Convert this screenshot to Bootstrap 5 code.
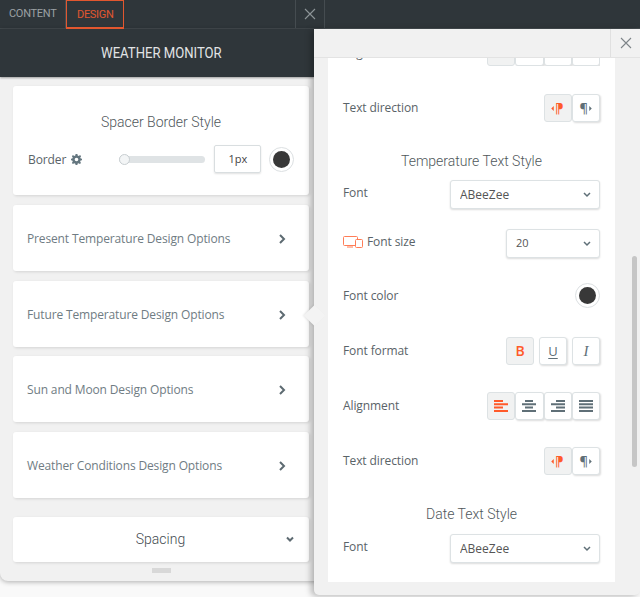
<!DOCTYPE html>
<html lang="en">
<head>
<meta charset="utf-8">
<title>Weather Monitor</title>
<link href="https://cdn.jsdelivr.net/npm/bootstrap@5.3.0/dist/css/bootstrap.min.css" rel="stylesheet">
<style>
html,body{height:100%;margin:0;overflow:hidden;background:#f9f9f9}
.app-frame{position:relative;width:640px;height:597px;overflow:hidden;background:#f9f9f9;font-family:"Open Sans","Liberation Sans",sans-serif;color:#5f6a70}
.tab-bar{height:29px;background:#2f363a;border-bottom:1px solid #454c50}
.tab-item{height:28px;width:66px;padding:0 9px;font:400 11px/28px Roboto,sans-serif;letter-spacing:-.3px;color:#9ba1a4;border-right:1px solid #454c50;white-space:nowrap}
.tab-on{width:58px;padding:0 0 0 10px;letter-spacing:-.3px;color:#e2572f;border:1px solid #e2572f;border-bottom-width:2px;line-height:27px;height:29px}
.tab-close{width:30px;margin-left:171px;height:28px;border-left:1px solid #454c50;border-right:1px solid #454c50;color:#8e9598}
.left-pane{width:323px;height:552px;background:#f1f1f1;border-radius:0 0 8px 8px;box-shadow:0 1px 5px rgba(0,0,0,.3)}
.title-strip{height:48px;background:#2f363a;color:#e2e4e5;text-align:center;width:314px;box-shadow:0 1px 2px rgba(0,0,0,.35);padding-left:8px}
.title-text{display:inline-block;font:400 15.500px/48px Roboto,sans-serif;transform:scaleX(.845)}
.side-list{width:296px;margin-left:13px}
.pane-card{border:0;border-radius:3px;box-shadow:1px 1px 3px rgba(0,0,0,.12);background:#fff}
.card-style{height:109px;margin-top:9px;padding:26px 15px 0}
.card-option{height:66px;padding:2px 23px 0 14px;font-size:12px;letter-spacing:-.14px;color:#6f7c83}
.gap-a{margin-top:10px}
.gap-b{margin-top:9px}
.card-spacing{height:45px;margin-top:19px;padding:0 15px 1px 14px;font:300 14px Roboto,sans-serif;color:#444b50}
.spacing-word{padding-left:8px}
.sect-title{font:300 14px/20px Roboto,sans-serif;color:#50575b;text-align:center}
.field-label{font-size:12px;letter-spacing:-.1px;color:#5a6368}
.border-row{margin-top:13px;height:28px}
.gear-mark{margin-left:5px;margin-top:1px;width:11px;height:11px;fill:#64767f;flex:none}
.border-row .field-label{margin-top:2px}
.thin-range{width:86px;height:11px;margin-left:37px;padding:0;display:block;flex:none}
.thin-range::-webkit-slider-runnable-track{height:7px;background:#dfe3e5;border-radius:4px}
.thin-range::-webkit-slider-thumb{width:11px;height:11px;margin-top:-2px;background:#f3f5f6;border:1px solid #c8ced1;border-radius:50%;-webkit-appearance:none}
.num-box{width:47px;height:28px;margin-left:9px;flex:none;border:1px solid #d9dee0;border-radius:2px;box-shadow:0 1px 2px rgba(0,0,0,.12);font-size:11px;line-height:26px;text-align:center;color:#444}
.swatch{width:25px;height:25px;border-radius:50%;background:#fff;border:1px solid #dce0e2;display:flex;align-items:center;justify-content:center;flex:none}
.swatch::after{content:"";width:17px;height:17px;border-radius:50%;background:#383838}
.swatch-a{margin-left:8px}
.chev-r{width:8px;height:10px;fill:none;stroke:#5d6a71;stroke-width:2;flex:none}
.chev-d{width:8px;height:7px;fill:none;stroke:#5d6a71;stroke-width:2;flex:none}
.handle-bar{width:19px;height:5px;background:#d8d8d8;margin:6px 0 0 139px}
.right-pane{position:absolute;left:314px;top:29px;width:326px;height:566px;background:#f1f1f1;border-radius:0 0 5px 5px;box-shadow:-3px 1px 6px rgba(0,0,0,.28)}
.pane-notch{position:absolute;left:-7.500px;top:278.500px;width:15px;height:15px;background:#f3f3f3;transform:rotate(45deg);box-shadow:-1px 1px 2px rgba(0,0,0,.08)}
.pane-head{position:relative;height:29px;border-bottom:1px solid #e3e3e3;background:#f1f1f1}
.pane-x{width:30px;height:28px;border-left:1px solid #e0e0e0;color:#7d8488}
.pane-body{position:relative;width:287px;height:524px;margin-left:14px;background:#fff;padding:0 15px;overflow:hidden}
.scroll-thumb{position:absolute;left:318px;top:227px;width:5px;height:211px;background:#c6c6c6;border-radius:3px}
.cut-row{height:8px;overflow:hidden;align-items:flex-end}
.cut-row .field-label{line-height:12px;margin-bottom:7px}
.ctl-row{height:28px}
.m28{margin-top:28px}.m29{margin-top:29px}.m9{margin-top:9px}.m10{margin-top:10px}.m20{margin-top:20px}.m25{margin-top:25px}.m27{margin-top:27px}
.head-row{height:20px}
.tool-btn{width:28.250px;height:28px;padding:0;margin-left:0;border:1px solid #dde2e4;border-radius:3px;background:#fff;box-shadow:1px 1px 2px rgba(0,0,0,.14);display:flex;align-items:center;justify-content:center;gap:1px;font:400 13px/1 "Open Sans",sans-serif;color:#5f6f77}
.tool-on{background:#f1f2f2;color:#ff5a2a;box-shadow:none}
.tool-wide{width:28px;margin-left:5px}
.tool-btn svg{width:14px;height:12px;fill:currentColor}
.tool-btn .tri-mark{width:3px;height:5px}
.sel-box{height:29px;padding:0 24px 0 9px;border:1px solid #dde2e4;border-radius:3px;box-shadow:0 1px 2px rgba(0,0,0,.14);font-size:12px;color:#555;background-image:url("data:image/svg+xml,%3csvg xmlns='http://www.w3.org/2000/svg' viewBox='0 0 8 6'%3e%3cpath fill='none' stroke='%235f6f77' stroke-width='1.500' d='M1 1l3 3 3-3'/%3e%3c/svg%3e");background-size:8px 6px;background-position:right 8px center}
.sel-long{width:150px}
.sel-short{width:94px;font-size:11px}
.screen-mark{width:20px;height:13px;margin-right:4px;fill:none;stroke:#ff7d57;stroke-width:1}
.pilcrow{font-size:13px;line-height:1;font-weight:600}
.pilcrow-flip{display:inline-block;transform:scaleX(-1)}
.mark-b{font-size:14px;font-weight:600}
.mark-u{text-decoration:underline;text-underline-offset:2px}
.mark-i{font:italic 400 15px/1 "Liberation Serif",serif}
</style>
</head>
<body>
<div class="app-frame">
  <div class="tab-bar d-flex">
    <div class="tab-item">CONTENT</div>
    <div class="tab-item tab-on">DESIGN</div>
    <div class="tab-close d-flex align-items-center justify-content-center">
      <svg width="12" height="12" viewBox="0 0 12 12" stroke="currentColor" stroke-width="1.1"><path d="M1 1l10 10M11 1L1 11"/></svg>
    </div>
  </div>
  <div class="left-pane">
    <div class="title-strip"><span class="title-text">WEATHER MONITOR</span></div>
    <div class="side-list">
      <div class="card pane-card card-style">
        <div class="sect-title">Spacer Border Style</div>
        <div class="border-row d-flex align-items-center">
          <span class="field-label">Border</span>
          <svg class="gear-mark" viewBox="0 0 12 12"><path fill-rule="evenodd" d="M5 0h2l.3 1.600 1.200.5L9.900 1.200l1.100 1.300-.9 1.300.5 1.200 1.400.3v1.500l-1.500.3-.5 1.200.9 1.400-1.200 1.200-1.400-.9-1.200.5L7 12H5l-.3-1.500-1.200-.5-1.400.9L1 9.700l.9-1.400-.5-1.200L0 6.800V5.200l1.400-.3.5-1.200L1 2.400l1.100-1.200 1.400.9 1.200-.5zM6 4a2 2 0 100 4 2 2 0 000-4z"/></svg>
          <input type="range" class="form-range thin-range" min="0" max="100" value="0" aria-label="Border">
          <div class="num-box">1px</div>
          <span class="swatch swatch-a"></span>
        </div>
      </div>
      <div class="card pane-card card-option gap-a flex-row align-items-center justify-content-between">Present Temperature Design Options<svg class="chev-r" viewBox="0 0 8 10"><path d="M2 1l4 4-4 4"/></svg></div>
      <div class="card pane-card card-option gap-a flex-row align-items-center justify-content-between">Future Temperature Design Options<svg class="chev-r" viewBox="0 0 8 10"><path d="M2 1l4 4-4 4"/></svg></div>
      <div class="card pane-card card-option gap-b flex-row align-items-center justify-content-between">Sun and Moon Design Options<svg class="chev-r" viewBox="0 0 8 10"><path d="M2 1l4 4-4 4"/></svg></div>
      <div class="card pane-card card-option gap-a flex-row align-items-center justify-content-between">Weather Conditions Design Options<svg class="chev-r" viewBox="0 0 8 10"><path d="M2 1l4 4-4 4"/></svg></div>
      <div class="card pane-card card-spacing flex-row align-items-center justify-content-between">
        <span class="flex-grow-1 text-center spacing-word">Spacing</span>
        <svg class="chev-d" viewBox="0 0 8 7"><path d="M1 1.500l3 3 3-3"/></svg>
      </div>
      <div class="handle-bar"></div>
    </div>
  </div>

  <div class="right-pane">
    <div class="pane-notch"></div>
    <div class="pane-head d-flex justify-content-end">
      <div class="pane-x d-flex align-items-center justify-content-center">
        <svg width="12" height="12" viewBox="0 0 12 12" stroke="currentColor" stroke-width="1.1"><path d="M1 1l10 10M11 1L1 11"/></svg>
      </div>
    </div>
    <div class="pane-body">
      <div class="cut-row d-flex justify-content-between">
        <span class="field-label">Alignment</span>
        <div class="d-flex">
          <span class="tool-btn tool-on"></span><span class="tool-btn"></span><span class="tool-btn"></span><span class="tool-btn"></span>
        </div>
      </div>
      <div class="ctl-row m28 d-flex align-items-center justify-content-between">
        <span class="field-label">Text direction</span>
        <div class="d-flex">
          <button class="tool-btn tool-on"><svg class="tri-mark" viewBox="0 0 3 6"><path d="M0 3l3-3v6z"/></svg><span class="pilcrow pilcrow-flip">¶</span></button>
          <button class="tool-btn"><span class="pilcrow">¶</span><svg class="tri-mark" viewBox="0 0 3 6"><path d="M3 3L0 0v6z"/></svg></button>
        </div>
      </div>
      <div class="sect-title head-row m29">Temperature Text Style</div>
      <div class="m9 d-flex align-items-center justify-content-between">
        <span class="field-label pb-1">Font</span>
        <select class="form-select sel-box sel-long" aria-label="Font"><option>ABeeZee</option></select>
      </div>
      <div class="m20 d-flex align-items-center justify-content-between">
        <span class="field-label d-flex align-items-center pb-1">
          <svg class="screen-mark" viewBox="0 0 20 13"><rect x=".5" y="1.500" width="14" height="9" rx="1"/><path d="M4 12h6"/><rect x="12.500" y="4.500" width="7" height="8" rx="1" fill="#fff"/></svg>Font size
        </span>
        <select class="form-select sel-box sel-short" aria-label="Font size"><option>20</option></select>
      </div>
      <div class="m25 d-flex align-items-center justify-content-between">
        <span class="field-label">Font color</span>
        <span class="swatch"></span>
      </div>
      <div class="ctl-row m29 d-flex align-items-center justify-content-between">
        <span class="field-label">Font format</span>
        <div class="d-flex">
          <button class="tool-btn tool-wide tool-on mark-b">B</button>
          <button class="tool-btn tool-wide mark-u">U</button>
          <button class="tool-btn tool-wide mark-i">I</button>
        </div>
      </div>
      <div class="ctl-row m27 d-flex align-items-center justify-content-between">
        <span class="field-label">Alignment</span>
        <div class="d-flex">
          <button class="tool-btn tool-on"><svg viewBox="0 0 14 12"><path d="M0 0h9v2H0zM0 3.300h14v2H0zM0 6.600h9v2H0zM0 9.900h14v2H0z"/></svg></button>
          <button class="tool-btn"><svg viewBox="0 0 14 12"><path d="M3 0h8v2H3zM0 3.300h14v2H0zM3 6.600h8v2H3zM0 9.900h14v2H0z"/></svg></button>
          <button class="tool-btn"><svg viewBox="0 0 14 12"><path d="M5 0h9v2H5zM0 3.300h14v2H0zM5 6.600h9v2H5zM0 9.900h14v2H0z"/></svg></button>
          <button class="tool-btn"><svg viewBox="0 0 14 12"><path d="M0 0h14v2H0zM0 3.300h14v2H0zM0 6.600h14v2H0zM0 9.900h14v2H0z"/></svg></button>
        </div>
      </div>
      <div class="ctl-row m27 d-flex align-items-center justify-content-between">
        <span class="field-label">Text direction</span>
        <div class="d-flex">
          <button class="tool-btn tool-on"><svg class="tri-mark" viewBox="0 0 3 6"><path d="M0 3l3-3v6z"/></svg><span class="pilcrow pilcrow-flip">¶</span></button>
          <button class="tool-btn"><span class="pilcrow">¶</span><svg class="tri-mark" viewBox="0 0 3 6"><path d="M3 3L0 0v6z"/></svg></button>
        </div>
      </div>
      <div class="sect-title head-row m29">Date Text Style</div>
      <div class="m10 d-flex align-items-center justify-content-between">
        <span class="field-label pb-1">Font</span>
        <select class="form-select sel-box sel-long" aria-label="Font"><option>ABeeZee</option></select>
      </div>
    </div>
    <div class="scroll-thumb"></div>
  </div>
</div>
<script src="https://cdn.jsdelivr.net/npm/bootstrap@5.3.0/dist/js/bootstrap.bundle.min.js"></script>
</body>
</html>
